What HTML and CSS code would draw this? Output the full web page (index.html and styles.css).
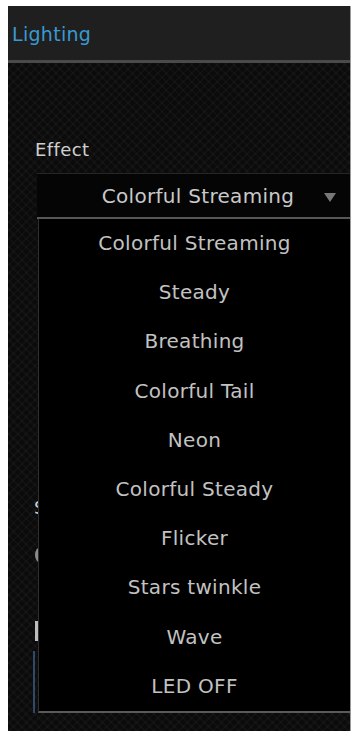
FILE: index.html
```html
<!DOCTYPE html>
<html lang="en">
<head>
  <meta charset="UTF-8" />
  <meta name="viewport" content="width=device-width, initial-scale=1.0"/>
  <title>Lighting</title>
  <link rel="stylesheet" href="styles.css">
</head>
<body>

  <div id="frame">
    <div id="header">Lighting</div>

    <div id="panel">
      <div id="effectLabel">Effect</div>

      <div id="effectSelect">
        <span class="current">Colorful Streaming</span>
        <span class="arrow"></span>
      </div>

      <div id="listWrap">
        <!-- controls underneath the open list, only their left edge shows -->
        <div id="underneath">
          <span class="speedLabel">S</span>
          <span class="knob"></span>
          <span class="bar"></span>
          <span class="box"></span>
        </div>

        <ul id="effectList">
          <li>Colorful Streaming</li>
          <li>Steady</li>
          <li>Breathing</li>
          <li>Colorful Tail</li>
          <li>Neon</li>
          <li>Colorful Steady</li>
          <li>Flicker</li>
          <li>Stars twinkle</li>
          <li>Wave</li>
          <li>LED OFF</li>
        </ul>
      </div>
    </div>
  </div>

</body>
</html>
```

FILE: styles.css
```css
body {
  margin: 0;
  padding: 0;
  overflow: hidden;
  background-color: #fff;
  font-family: "DejaVu Sans", "Liberation Sans", sans-serif;
}

#frame {
  margin: 6px 5px 0 8px;
  height: calc(100vh - 6px);
  background-color: #0a0a0a;
  border-right: 1px solid #9a9a9a;
  display: flex;
  flex-direction: column;
}

#header {
  height: 54px;
  flex-shrink: 0;
  background-color: #1f1f1f;
  border-bottom: 3px solid #4a4a4a;
  color: #3a9ad2;
  font-size: 19px;
  line-height: 56px;
  padding-left: 4px;
  letter-spacing: 0.3px;
}

#panel {
  flex: 1;
  padding-left: 27px;
  background-color: #0b0b0b;
  background-image:
    repeating-linear-gradient(45deg, rgba(255,255,255,0.025) 0 2px, transparent 2px 6px),
    repeating-linear-gradient(-45deg, rgba(255,255,255,0.025) 0 2px, transparent 2px 6px);
}

#effectLabel {
  margin-top: 77px;
  color: #cfcfcf;
  font-size: 18px;
  line-height: 20px;
  letter-spacing: 0.4px;
}

#effectSelect {
  margin: 13px 0 0 2px;
  height: 43px;
  background-color: #050505;
  border-top: 1px solid #262626;
  border-bottom: 2px solid #575757;
  display: flex;
  align-items: center;
  justify-content: center;
  position: relative;
  color: #c9c9c9;
  font-size: 20px;
  letter-spacing: 0.3px;
}

#effectSelect .current {
  margin-left: 9px;
}

#effectSelect .arrow {
  position: absolute;
  right: 14px;
  top: 19px;
  width: 0;
  height: 0;
  border-left: 6px solid transparent;
  border-right: 6px solid transparent;
  border-top: 9px solid #777;
}

#listWrap {
  position: relative;
}

#underneath {
  position: absolute;
  top: 0;
  left: 0;
  width: 40px;
  height: 490px;
}

#underneath span {
  position: absolute;
}

.speedLabel {
  top: 278px;
  left: -1px;
  color: #cfcfcf;
  font-size: 18px;
}

.knob {
  top: 328px;
  left: 0;
  width: 12px;
  height: 16px;
  border-radius: 50%;
  background-color: #8a8a8a;
}

.bar {
  top: 402px;
  left: 0;
  width: 3px;
  height: 20px;
  background-color: #bdbdbd;
}

.box {
  top: 432px;
  left: -2px;
  width: 30px;
  height: 62px;
  border-left: 2px solid #2f4a66;
}

#effectList {
  position: relative;
  list-style: none;
  margin: 0 0 0 3px;
  padding: 0;
  background-color: #000;
  border-left: 1px solid #2e2e2e;
  border-bottom: 2px solid #5a5a5a;
}

#effectList li {
  height: 49.2px;
  line-height: 49.2px;
  text-align: center;
  color: #c2c2c2;
  font-size: 20px;
  letter-spacing: 0.3px;
}
```
